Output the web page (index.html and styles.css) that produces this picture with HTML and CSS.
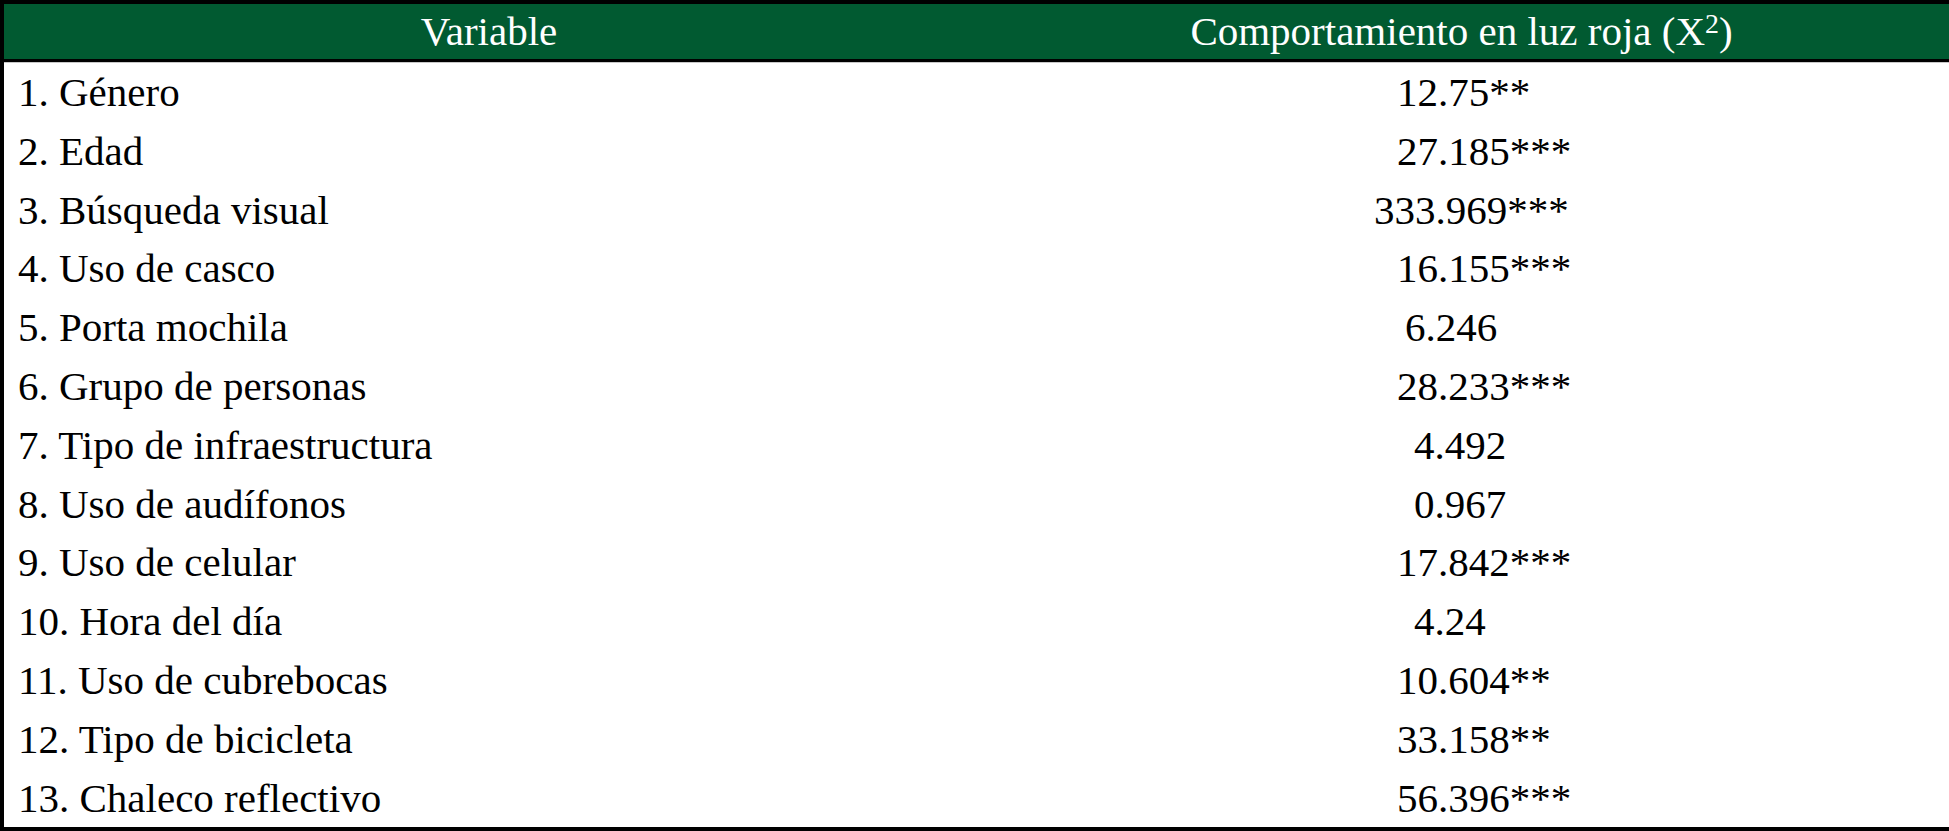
FILE: index.html
```html
<!DOCTYPE html>
<html lang="es">
<head>
<meta charset="utf-8">
<title>Comportamiento en luz roja</title>
<link rel="stylesheet" href="styles.css">
</head>
<body>
<table class="stats">
  <thead>
    <tr>
      <th class="col-var">Variable</th>
      <th class="col-val">Comportamiento en luz roja (X<sup>2</sup>)</th>
    </tr>
  </thead>
  <tbody>
    <tr><td class="var">1. Género</td><td class="val">12.75**</td></tr>
    <tr><td class="var">2. Edad</td><td class="val">27.185***</td></tr>
    <tr><td class="var">3. Búsqueda visual</td><td class="val val-wide">333.969***</td></tr>
    <tr><td class="var">4. Uso de casco</td><td class="val">16.155***</td></tr>
    <tr><td class="var">5. Porta mochila</td><td class="val val-mid">6.246</td></tr>
    <tr><td class="var">6. Grupo de personas</td><td class="val">28.233***</td></tr>
    <tr><td class="var">7. Tipo de infraestructura</td><td class="val val-short">4.492</td></tr>
    <tr><td class="var">8. Uso de audífonos</td><td class="val val-short">0.967</td></tr>
    <tr><td class="var">9. Uso de celular</td><td class="val">17.842***</td></tr>
    <tr><td class="var">10. Hora del día</td><td class="val val-short">4.24</td></tr>
    <tr><td class="var">11. Uso de cubrebocas</td><td class="val">10.604**</td></tr>
    <tr><td class="var">12. Tipo de bicicleta</td><td class="val">33.158**</td></tr>
    <tr><td class="var">13. Chaleco reflectivo</td><td class="val">56.396***</td></tr>
  </tbody>
</table>
</body>
</html>
```
FILE: styles.css
```css
html, body {
  margin: 0;
  padding: 0;
  background: #ffffff;
  overflow: hidden;
}

.stats {
  width: 1949px;
  border-collapse: separate;
  border-spacing: 0;
  table-layout: fixed;
  font-family: "Liberation Serif", "Times New Roman", serif;
  font-size: 41px;
  color: #000000;
  border-top: 4px solid #000000;
  border-left: 4px solid #000000;
  border-bottom: 4px solid #000000;
}

.stats th {
  background: #015a31;
  color: #ffffff;
  font-weight: normal;
  text-align: center;
  height: 55px;
  line-height: 55px;
  padding: 0;
  border-bottom: 3px solid #000000;
  white-space: nowrap;
}

.col-var {
  width: 970px;
}

.stats sup {
  font-size: 0.68em;
  line-height: 0;
  vertical-align: 0.42em;
}

.stats td {
  height: 58.8px;
  line-height: 58.8px;
  padding: 0;
  white-space: nowrap;
}

.stats tbody tr:first-child td {
  border-top: 1px solid #c8c8c8;
}

.var {
  padding-left: 14px !important;
}

.val {
  text-align: left;
  padding-left: 423px !important;
}

.val-wide {
  padding-left: 400px !important;
}

.val-mid {
  padding-left: 431px !important;
}

.val-short {
  padding-left: 440px !important;
}
```
